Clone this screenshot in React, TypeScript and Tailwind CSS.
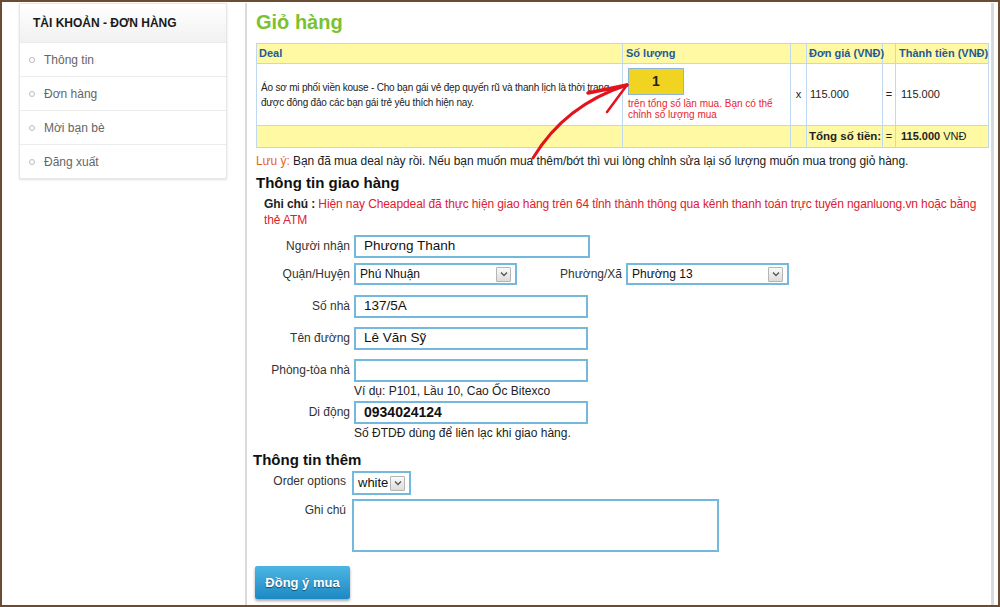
import React from "react";

const font = { fontFamily: '"Liberation Sans", Arial, sans-serif' };

const Chevron = () => (
  <span className="flex items-center justify-center w-[15px] h-[15px] border border-[#b5b5b5] bg-gradient-to-b from-[#fafafa] to-[#dcdcdc] rounded-[1px]">
    <svg width="8" height="6" viewBox="0 0 8 6">
      <path d="M1 1.5 L4 4.5 L7 1.5" fill="none" stroke="#555" strokeWidth="1.3" />
    </svg>
  </span>
);

const SelectBox = ({ value, w, text = "text-[12px]" }: { value: string; w: string; text?: string }) => (
  <div className={`${w} h-[22px] border-2 border-[#72b9dd] bg-white flex items-center justify-between pl-1 pr-[4px] ${text} text-[#111]`}>
    <span>{value}</span>
    <Chevron />
  </div>
);

const Field = ({
  label,
  value,
  w = "w-[236px]",
  bold = false,
  help,
}: {
  label: string;
  value: string;
  w?: string;
  bold?: boolean;
  help?: string;
}) => (
  <div className="flex items-start">
    <div className="w-[98px] pr-[4px] text-right text-[12px] text-[#333] leading-[22px] whitespace-nowrap">{label}</div>
    <div className="flex flex-col">
      <div
        className={`${w} h-[23px] border-2 border-[#72b9dd] bg-white flex items-center px-2 text-[#111] ${
          bold ? "font-bold text-[14px]" : "text-[13.5px]"
        }`}
      >
        {value}
      </div>
      {help && <div className="text-[12px] text-[#222] leading-[16px] mt-[1px] whitespace-nowrap">{help}</div>}
    </div>
  </div>
);

const menu = ["Thông tin", "Đơn hàng", "Mời bạn bè", "Đăng xuất"];
const cell = "border border-[#bfd8ee]";

export default function App() {
  return (
    <div
      style={font}
      className="relative w-[1000px] h-[607px] overflow-hidden border-2 border-[#6b4c33] bg-white flex pl-[17px] pt-[1px]"
    >
      {/* sidebar */}
      <div className="w-[208px] self-start border border-[#e6e6e6] shadow-[0_1px_2px_rgba(0,0,0,0.12)] bg-white">
        <div className="h-[38px] flex items-center pl-[13px] bg-gradient-to-b from-white to-[#f1f1f1] text-[12px] font-bold text-[#1a1a1a]">
          TÀI KHOẢN - ĐƠN HÀNG
        </div>
        {menu.map((m) => (
          <div key={m} className="h-[34px] border-t border-[#ececec] flex items-center pl-[9px] gap-[9px] text-[12px] text-[#666]">
            <span className="w-[6px] h-[6px] rounded-full border border-[#bbb]" />
            {m}
          </div>
        ))}
      </div>

      {/* main */}
      <div className="ml-[18px] w-[749px] h-[620px] border-l-2 border-r-[3px] border-[#dadada] pl-[9px] pt-[7px] bg-white">
        <h1 className="text-[20px] leading-[24px] font-bold text-[#7cc12e]">Giỏ hàng</h1>

        <table className="mt-[9px] w-[733px] table-fixed border-collapse text-[11px]">
          <colgroup>
            <col className="w-[366px]" />
            <col className="w-[168px]" />
            <col className="w-[16px]" />
            <col className="w-[76px]" />
            <col className="w-[13px]" />
            <col />
          </colgroup>
          <thead>
            <tr className="h-[20px] bg-[#fff9a3] text-[#1f5a98] font-bold text-left whitespace-nowrap">
              <th className={`${cell} px-[2px]`}>Deal</th>
              <th className={`${cell} px-[3px]`}>Số lượng</th>
              <th className={cell}></th>
              <th className={`${cell} px-[2px]`}>Đơn giá (VNĐ)</th>
              <th className={cell}></th>
              <th className={`${cell} px-[3px]`}>Thành tiền (VNĐ)</th>
            </tr>
          </thead>
          <tbody>
            <tr className="h-[62px] text-[#222]">
              <td className={`${cell} pl-[4px] pr-[2px] leading-[15px] text-[10px] tracking-[-0.2px]`}>
                Áo sơ mi phối viền kouse - Cho bạn gái vẻ đẹp quyến rũ và thanh lịch là thời trang được đông đảo các bạn gái trẻ yêu thích hiện nay.
              </td>
              <td className={`${cell} px-[5px] align-top pt-[4px]`}>
                <div className="w-[56px] h-[27px] bg-[#f0d421] border border-[#8cb5d9] flex items-center justify-center text-[14px] font-bold text-[#222]">
                  1
                </div>
                <div className="text-[10px] text-[#e8262e] leading-[11px] mt-[3px] whitespace-nowrap">
                  trên tổng số lần mua. Bạn có thể
                  <br />
                  chỉnh số lượng mua
                </div>
              </td>
              <td className={`${cell} text-center`}>x</td>
              <td className={`${cell} px-[3px]`}>115.000</td>
              <td className={`${cell} text-center`}>=</td>
              <td className={`${cell} px-[5px]`}>115.000</td>
            </tr>
            <tr className="h-[22px] bg-[#fff9a3] text-[#222] whitespace-nowrap">
              <td className={cell}></td>
              <td className={cell}></td>
              <td className={cell}></td>
              <td className={`${cell} px-[2px] font-bold text-[11.5px]`}>Tổng số tiền:</td>
              <td className={`${cell} text-center`}>=</td>
              <td className={`${cell} px-[5px]`}>
                <b>115.000</b> VNĐ
              </td>
            </tr>
          </tbody>
        </table>

        <p className="mt-[5px] text-[12px] leading-[16px] text-[#222] whitespace-nowrap tracking-[-0.05px]">
          <span className="text-[#e8641b]">Lưu ý:</span> Bạn đã mua deal này rồi. Nếu bạn muốn mua thêm/bớt thì vui lòng chỉnh sửa lại số lượng muốn mua trong giỏ hàng.
        </p>

        <h2 className="mt-[5px] text-[15px] leading-[18px] font-bold text-[#111]">Thông tin giao hàng</h2>

        <p className="mt-[4px] pl-[8px] text-[12px] leading-[16px] text-[#e0202e] tracking-[-0.1px]">
          <b className="text-[#222]">Ghi chú :</b> Hiện nay Cheapdeal đã thực hiện giao hàng trên 64 tỉnh thành thông qua kênh thanh toán trực tuyến nganluong.vn hoặc bằng thẻ ATM
        </p>

        <div className="mt-[7px] flex flex-col">
          <Field label="Người nhận" value="Phương Thanh" />
          <div className="mt-[5px] flex items-center">
            <div className="w-[98px] pr-[4px] text-right text-[12px] text-[#333]">Quận/Huyện</div>
            <SelectBox value="Phú Nhuận" w="w-[163px]" />
            <div className="w-[109px] pr-[4px] text-right text-[12px] text-[#333]">Phường/Xã</div>
            <SelectBox value="Phường 13" w="w-[163px]" />
          </div>
          <div className="mt-[10px]">
            <Field label="Số nhà" value="137/5A" w="w-[234px]" />
          </div>
          <div className="mt-[9px]">
            <Field label="Tên đường" value="Lê Văn Sỹ" w="w-[234px]" />
          </div>
          <div className="mt-[9px]">
            <Field label="Phòng-tòa nhà" value="" w="w-[234px]" help="Ví dụ: P101, Lầu 10, Cao Ốc Bitexco" />
          </div>
          <div className="mt-[2px]">
            <Field label="Di động" value="0934024124" w="w-[234px]" bold help="Số ĐTDĐ dùng để liên lạc khi giao hàng." />
          </div>
        </div>

        <h2 className="mt-[10px] -ml-[3px] text-[15px] leading-[18px] font-bold text-[#111]">Thông tin thêm</h2>

        <div className="mt-[2px] flex items-start">
          <div className="w-[96px] pr-[6px] text-right text-[12px] text-[#333] leading-[20px]">Order options</div>
          <SelectBox value="white" w="w-[59px] h-[24px]" text="text-[13px]" />
        </div>
        <div className="mt-[4px] flex items-start">
          <div className="w-[96px] pr-[6px] text-right text-[12px] text-[#333] leading-[22px]">Ghi chú</div>
          <div className="w-[367px] h-[53px] border-2 border-[#72b9dd] bg-white" />
        </div>

        <button className="mt-[14px] -ml-[1px] w-[95px] h-[33px] rounded-[2px] bg-gradient-to-b from-[#4bb6e4] to-[#1c89c3] shadow-[0_2px_3px_rgba(0,0,0,0.35)] text-white font-bold text-[13px] [text-shadow:0_1px_1px_rgba(0,0,0,0.5)]">
          Đồng ý mua
        </button>
      </div>

      {/* red hand-drawn arrow */}
      <svg className="absolute left-[-2px] top-[-2px] pointer-events-none" width="1000" height="607">
        <path d="M533 158 Q 565 105 627 85" fill="none" stroke="#e4121b" strokeWidth="3" strokeLinecap="round" />
        <path d="M627 85 L 588 93" fill="none" stroke="#e4121b" strokeWidth="3.5" strokeLinecap="round" />
        <path d="M627 85 L 607 112" fill="none" stroke="#e4121b" strokeWidth="2.5" strokeLinecap="round" />
      </svg>
    </div>
  );
}
